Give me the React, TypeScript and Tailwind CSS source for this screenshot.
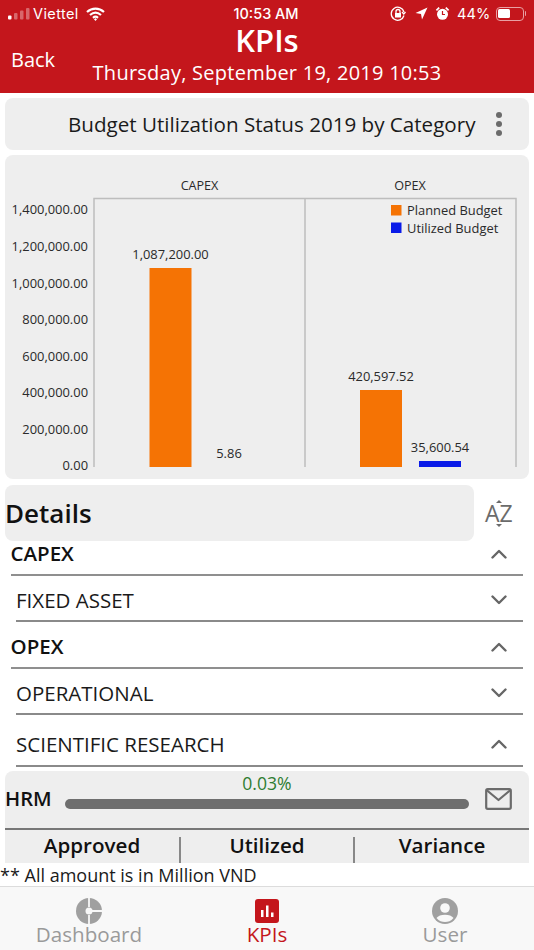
import React from "react";

const Chevron = ({ up }: { up?: boolean }) => (
  <svg width="16" height="10" viewBox="0 0 16 10" fill="none" stroke="#666" strokeWidth="2.4" strokeLinecap="round" strokeLinejoin="round">
    <path d={up ? "M1.5 8.5 L8 2 L14.5 8.5" : "M1.5 1.5 L8 8 L14.5 1.5"} />
  </svg>
);

const Section = ({ label, up, h }: { label: string; up?: boolean; h: string }) => (
  <div className={`${h} ml-[11px] mr-[11px] flex items-center justify-between border-b-2 border-[#8f8f8f] pr-[16px]`}>
    <span className="ml-[-0.5px] text-[20.5px] font-semibold leading-none text-[#111]">{label}</span>
    <Chevron up={up} />
  </div>
);

const Sub = ({ label, up, h }: { label: string; up?: boolean; h: string }) => (
  <div className={`${h} ml-[16px] mr-[11px] flex items-center justify-between border-b-2 border-[#8a8a8a] pr-[16px]`}>
    <span className="text-[20.5px] leading-none text-[#1a1a1a]">{label}</span>
    <Chevron up={up} />
  </div>
);

const Chart = () => {
  const ticks = ["1,400,000.00", "1,200,000.00", "1,000,000.00", "800,000.00", "600,000.00", "400,000.00", "200,000.00", "0.00"];
  return (
    <svg className="block" width="524" height="324" viewBox="5 155 524 324" fontFamily="'Open Sans', sans-serif" fontSize="12.9" fill="#2a2a2a">
      <path d="M94 467 V198.5 H516 V467 M305 198.5 V467" fill="none" stroke="#bdbdbd" strokeWidth="1.5" />
      <text x="199.500" y="190" textAnchor="middle" fontSize="12.6">CAPEX</text>
      <text x="410" y="190" textAnchor="middle" fontSize="12.6">OPEX</text>
      {ticks.map((t, i) => (
        <text key={t} x="88" y={214.400 + i * 36.55} textAnchor="end">{t}</text>
      ))}
      <rect x="149.500" y="268" width="42" height="199" fill="#f57304" />
      <rect x="360" y="390" width="42" height="77" fill="#f57304" />
      <rect x="419" y="461" width="42" height="6" fill="#0a1be8" />
      <text x="170.500" y="259" textAnchor="middle">1,087,200.00</text>
      <text x="229" y="457.500" textAnchor="middle">5.86</text>
      <text x="381" y="380.500" textAnchor="middle">420,597.52</text>
      <text x="440" y="451.500" textAnchor="middle">35,600.54</text>
      <rect x="391" y="205" width="10.500" height="10.500" fill="#f57304" />
      <rect x="391" y="222.500" width="10.500" height="10.500" fill="#0a1be8" />
      <text x="407" y="214.800">Planned Budget</text>
      <text x="407" y="232.800">Utilized Budget</text>
    </svg>
  );
};

export default function App() {
  return (
    <div className="flex h-[950px] w-[534px] flex-col overflow-hidden bg-white font-['Open_Sans',sans-serif]">
      {/* Header */}
      <div className="flex h-[93px] flex-col bg-[#c4161c] text-white">
        <div className="flex h-[26px] items-center justify-between pl-[8px] pr-[8px] pt-[1px] font-['Inter',sans-serif] text-[14.5px] leading-[18px]">
          <div className="flex w-[180px] items-center">
            <svg width="22" height="12" viewBox="0 0 22 12" fill="#fff">
              <rect x="0" y="7.500" width="3.500" height="4" rx="1" />
              <rect x="6" y="5" width="3.500" height="6.500" rx="1" opacity="0.35" />
              <rect x="12" y="2.500" width="3.500" height="9" rx="1" opacity="0.35" />
              <rect x="18" y="0" width="3.500" height="11.500" rx="1" opacity="0.35" />
            </svg>
            <span className="ml-[3px] tracking-[0.4px]">Viettel</span>
            <svg className="ml-[7px]" width="19" height="14" viewBox="0 0 19 14" fill="none" stroke="#fff" strokeWidth="2.200">
              <path d="M1 5 C6 0.500 13 0.500 18 5" />
              <path d="M4 8 C7.500 5 11.500 5 15 8" />
              <path d="M7 10.800 C8.500 9.500 10.500 9.500 12 10.800" />
              <circle cx="9.500" cy="12.500" r="0.800" fill="#fff" strokeWidth="1" />
            </svg>
          </div>
          <span className="mr-[2px] font-medium">10:53 AM</span>
          <div className="flex w-[180px] items-center justify-end">
            <svg width="16" height="16" viewBox="0 0 16 16" fill="none" stroke="#fff" strokeWidth="1.300">
              <path d="M14 9.500 A6.500 6.500 0 1 1 14 6" />
              <path d="M15.500 6 L13.800 8 L12 6" />
              <rect x="5" y="7" width="6" height="4.500" fill="#fff" stroke="none" />
              <path d="M6 7 V5.500 A2 2 0 0 1 10 5.500 V7" />
            </svg>
            <svg className="ml-[9px]" width="13" height="13" viewBox="0 0 13 13" fill="#fff">
              <path d="M12.500 0.500 L7 12.500 L6 7 L0.500 6 Z" />
            </svg>
            <svg className="ml-[7px]" width="15" height="15" viewBox="0 0 15 15" fill="#fff">
              <circle cx="7.500" cy="8.300" r="5.500" />
              <path d="M0.800 3.800 L3.600 1 L4.800 2.200 L2 5 Z M14.200 3.800 L11.400 1 L10.200 2.200 L13 5 Z" />
              <path d="M7.500 5 V8.500 H10" fill="none" stroke="#c4161c" strokeWidth="1.200" />
            </svg>
            <span className="ml-[7px] tracking-[0.2px]">44%</span>
            <div className="ml-[5px] flex h-[14px] w-[28px] items-center rounded-[4px] border border-[#e8a0a3] p-[1.500px]">
              <div className="h-full w-[12px] rounded-[1.500px] bg-white" />
            </div>
            <div className="ml-[1px] h-[5px] w-[1.500px] rounded-r-sm bg-[#e8a0a3]" />
          </div>
        </div>
        <div className="flex flex-1 items-center">
          <span className="ml-[11px] w-0 whitespace-nowrap text-[20px] leading-none">Back</span>
          <div className="ml-[-11px] flex flex-1 flex-col items-center">
            <span className="mt-[-6px] text-[31px] font-semibold leading-[24px]">KPIs</span>
            <span className="mt-[7px] text-[20px] leading-[27px] tracking-[0.25px]">Thursday, September 19, 2019 10:53</span>
          </div>
        </div>
      </div>

      {/* Title card */}
      <div className="mx-[5px] mt-[5px] flex h-[52px] items-center rounded-[8px] bg-[#eeeeee]">
        <span className="ml-[63px] flex-1 whitespace-nowrap text-[20.6px] leading-none text-[#1a1a1a]">Budget Utilization Status 2019 by Category</span>
        <div className="mr-[27px] flex flex-col gap-[3px]">
          <span className="h-[6px] w-[6px] rounded-full bg-[#6b6b6b]" />
          <span className="h-[6px] w-[6px] rounded-full bg-[#6b6b6b]" />
          <span className="h-[6px] w-[6px] rounded-full bg-[#6b6b6b]" />
        </div>
      </div>

      {/* Chart */}
      <div className="mx-[5px] mt-[5px] h-[324px] rounded-[8px] bg-[#eeeeee]">
        <Chart />
      </div>

      {/* Details header */}
      <div className="mx-[5px] mt-[6px] flex h-[56px] items-center">
        <div className="flex h-full w-[469px] items-center rounded-[8px] bg-[#eeeeee]">
          <span className="text-[26px] font-semibold leading-none text-[#111]">Details</span>
        </div>
        <div className="relative ml-[11px] flex items-center text-[23px] leading-none text-[#6b6b6b]">
          <span>AZ</span>
          <span className="absolute left-[10.500px] top-[-2px] h-0 w-0 border-x-[3px] border-b-[3px] border-x-transparent border-b-[#6b6b6b]" />
          <span className="absolute bottom-[-2px] left-[10.500px] h-0 w-0 border-x-[3px] border-t-[3px] border-x-transparent border-t-[#6b6b6b]" />
        </div>
      </div>

      {/* Rows */}
      <Section label="CAPEX" up h="h-[35px] pb-[8px]" />
      <Sub label="FIXED ASSET" h="h-[46px] pt-[4px]" />
      <Section label="OPEX" up h="h-[47px] pt-[4px]" />
      <Sub label="OPERATIONAL" h="h-[46px] pt-[4px]" />
      <Sub label="SCIENTIFIC RESEARCH" up h="h-[52px] pt-[8px]" />

      {/* HRM card */}
      <div className="mx-[5px] mt-[4px] h-[92px] rounded-t-[8px] bg-[#eeeeee]">
        <div className="relative flex h-[59px] items-center border-b-2 border-[#777]">
          <span className="absolute left-0 right-0 top-[1px] text-center text-[17.6px] leading-[22px] text-[#2e7d32]">0.03%</span>
          <span className="mt-[-3px] w-[60px] text-[20.2px] font-semibold leading-none text-[#111]">HRM</span>
          <div className="mt-[8px] h-[10px] w-[404px] rounded-full bg-[#6e6e6e]" />
          <svg className="ml-[16px] mt-[-1px]" width="27" height="22" viewBox="0 0 27 22" fill="none" stroke="#6b6b6b" strokeWidth="2.200" strokeLinejoin="round">
            <rect x="1.200" y="1.200" width="24.600" height="19.600" rx="1.500" />
            <path d="M1.500 2 L13.500 12 L25.500 2" />
          </svg>
        </div>
        <div className="flex h-[33px] items-center">
          <span className="mt-[-2px] w-[174px] text-center text-[20.6px] font-semibold leading-none text-[#111]">Approved</span>
          <div className="h-[26px] w-[2px] self-end bg-[#888]" />
          <span className="mt-[-2px] w-[172px] text-center text-[20.6px] font-semibold leading-none text-[#111]">Utilized</span>
          <div className="h-[26px] w-[2px] self-end bg-[#888]" />
          <span className="mt-[-2px] flex-1 text-center text-[20.6px] font-semibold leading-none text-[#111]">Variance</span>
        </div>
      </div>

      {/* Footnote */}
      <div className="h-[23px] text-[18px] leading-[24px] text-[#1a1a1a]">** All amount is in Million VND</div>

      {/* Tab bar */}
      <div className="flex flex-1 border-t border-[#dcdcdc] bg-[#f8f8f8]">
        <div className="flex w-[178px] flex-col items-center pt-[11px]">
          <svg width="26" height="26" viewBox="0 0 26 26">
            <circle cx="13" cy="13" r="13" fill="#a0a0a0" />
            <path d="M13 0 V9 M13 17 V26 M16 13 H26" stroke="#f8f8f8" strokeWidth="1.800" fill="none" />
            <circle cx="13" cy="13" r="3.500" fill="#f8f8f8" />
          </svg>
          <span className="mt-[-4px] text-[20.6px] leading-[28px] text-[#9a9a9a]">Dashboard</span>
        </div>
        <div className="flex w-[178px] flex-col items-center pt-[12px]">
          <svg width="24" height="24" viewBox="0 0 24 24">
            <rect width="24" height="24" rx="3" fill="#c4161c" />
            <path d="M6 11 H8.500 V18 H6 Z M11 6.500 H13.500 V18 H11 Z M16 13.500 H18.500 V18 H16 Z" fill="#fff" />
          </svg>
          <span className="mt-[-3px] text-[20.6px] leading-[28px] text-[#c4161c]">KPIs</span>
        </div>
        <div className="flex w-[178px] flex-col items-center pt-[11px]">
          <svg width="26" height="26" viewBox="0 0 26 26">
            <circle cx="13" cy="13" r="13" fill="#a0a0a0" />
            <circle cx="13" cy="10" r="4.800" fill="#f8f8f8" />
            <path d="M4.500 20 C7 15.500 19 15.500 21.500 20 C19 23 16 24 13 24 C10 24 7 23 4.500 20 Z" fill="#f8f8f8" />
          </svg>
          <span className="mt-[-4px] text-[20.6px] leading-[28px] text-[#9a9a9a]">User</span>
        </div>
      </div>
    </div>
  );
}
